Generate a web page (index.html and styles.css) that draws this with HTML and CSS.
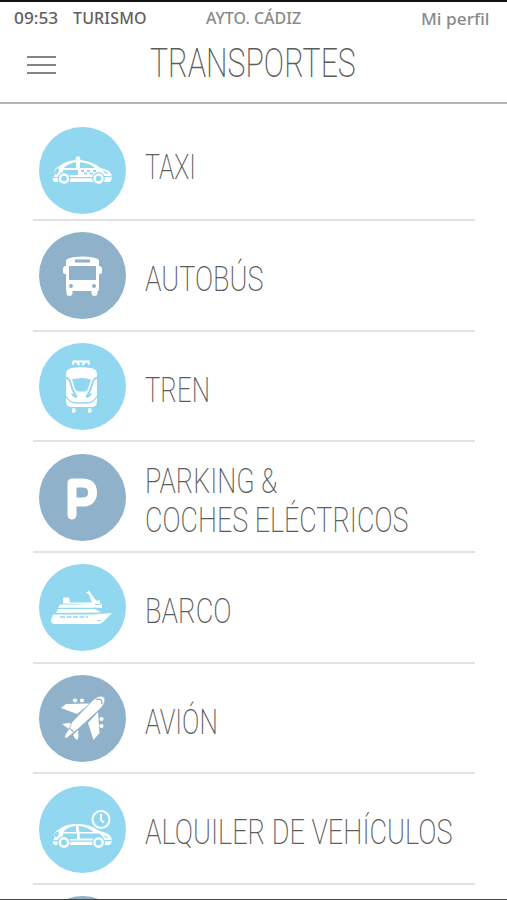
FILE: index.html
```html
<!DOCTYPE html>
<html lang="es">
<head>
<meta charset="utf-8">
<meta name="viewport" content="width=device-width">
<title>Transportes</title>
<link rel="stylesheet" href="styles.css">
</head>
<body>
<div class="screen">
  <header class="header">
    <div class="status">
      <span class="status-item time">09:53</span>
      <span class="status-item tourism">TURISMO</span>
      <span class="status-item council">AYTO. CÁDIZ</span>
      <span class="status-item profile">Mi perfil</span>
    </div>
    <div class="titlebar">
      <div class="menu"><i></i><i></i><i></i></div>
      <h1 class="title">TRANSPORTES</h1>
    </div>
  </header>
  <ul class="list">
    <li class="row first">
      <svg class="icon light" viewBox="0 0 87 87">
        <path fill="#fff" d="M14 54v-4l1.500-1v-6q2-3 5-4 6-5 16-6l1-3.500h3l1 3.500q11 1 20 8 10 2 11 7v5l-2 2H16z"/>
        <path fill="#91d7f0" d="M19 40.500q2 3-1 7h-2.500l.5-4zM25 40.500q5-4.500 12-5.200V41H25.500zM24 43h15v5H27l-3-2zM41 35.300q8 .5 14.500 5.200v.5H41z"/>
        <path fill="#91d7f0" d="M14 50h6v1h-6zM31 50h23v1.200H31zM64 49h8v1.200h-8zM64 43l6 4-4-.5zM42 43h3v2h-3zM48 43h3v2h-3zM54 43h3v2h-3zM45 45.500h3v2h-3zM51 45.500h3v2h-3z"/>
        <g fill="#fff" stroke="#91d7f0" stroke-width="1.200"><circle cx="25" cy="51.500" r="5.800"/><circle cx="59.500" cy="51.500" r="5.800"/></g>
        <g fill="#91d7f0"><circle cx="25" cy="51.500" r="2.800"/><circle cx="59.500" cy="51.500" r="2.800"/></g>
      </svg>
      <span class="label taxi">TAXI</span>
    </li>
    <li class="row">
      <svg class="icon dark" viewBox="0 0 87 87">
        <path fill="#fff" fill-rule="evenodd" d="M27 34V29q0-4 16.500-4.500Q60 25 60 29v5q3 0 3 3v3q0 2-3 2v15q0 2-1.500 2v2q0 3-3 3t-3-3v-2h-19v2q0 3-3 3t-3-3v-2Q27 59 27 57V42q-3 0-3-2v-3q0-3 3-3zM36 27.500v3h15v-3zM30 34v14h27V34z"/>
        <g fill="#8fb1c9"><circle cx="32" cy="54" r="2"/><circle cx="55" cy="54" r="2"/></g>
      </svg>
      <span class="label bus">AUTOBÚS</span>
    </li>
    <li class="row">
      <svg class="icon light" viewBox="0 0 87 87">
        <path fill="none" stroke="#fff" stroke-width="2.200" d="M33.500 18.500h17M35 18.500l-1.500 3M49 18.500l1.500 3M37.500 18.500l3 3.500M46.500 18.500l-3 3.500"/>
        <path fill="#fff" d="M27 31q0-5 6-6 9-1.500 19 0 6 1 6 6v27q0 6-6 6H33q-6 0-6-6z"/>
        <path fill="none" stroke="#91d7f0" stroke-width="1.800" d="M26 34.500q4.500 0 6 7t6 12.500M59 34.500q-4.500 0-6 7T47 54"/>
        <path fill="#91d7f0" d="M33 36.500q9.500-3 19 0l-2 6q-1 6-5 6h-5q-4 0-5-6z"/>
        <path fill="#91d7f0" d="M32 50l5 2v3q-4-1-5-5zM53 50l-5 2v3q4-1 5-5z"/>
        <path fill="none" stroke="#91d7f0" stroke-width="1.300" d="M27 53q3 7 11 7h9q8 0 11-7"/>
        <path fill="#fff" d="M33 65.500h3.500v4H33zM49 65.500h3.500v4H49z"/>
      </svg>
      <span class="label train">TREN</span>
    </li>
    <li class="row">
      <svg class="icon dark" viewBox="0 0 87 87">
        <path fill="none" stroke="#fff" stroke-width="9" stroke-linecap="round" stroke-linejoin="round" d="M33 61V29h10.500q10 0 10 9.500t-10 9.500H33"/>
      </svg>
      <span class="label"><span class="line parking-top">PARKING &amp;</span><span class="line parking-bottom">COCHES ELÉCTRICOS</span></span>
    </li>
    <li class="row">
      <svg class="icon light" viewBox="0 0 87 87">
        <path fill="#fff" d="M14 50.500h40l19-1.500-9 9q-2 2-5 2H16q-4 0-4-4zM17 49l2-4h37l6 3.500zM19 43.800l2-3.300h32l3 3.300zM24 39.500v-5l1-1h5l1 5h22l-2-5-1-3-3-2 2-1 1-1 2 3 2 3 3 4h4v3l2 1v3.500l-7-.5-4-3z"/>
        <path fill="none" stroke="#91d7f0" stroke-width="1.500" stroke-dasharray="5 1.500" d="M21 53h28"/>
        <path stroke="#91d7f0" d="M56 40.500h5M58 56.500h4"/>
      </svg>
      <span class="label ship">BARCO</span>
    </li>
    <li class="row">
      <svg class="icon dark" viewBox="0 0 87 87">
        <path fill="#fff" d="M22 33l5-4 24-.5-13 10.500zM59 37l1.500 21-6 7L49 48zM23 49l6-1 5 1-4 5zM34 60l5-5 .5 6-1 4-2-1z"/>
        <path fill="#fff" stroke="#8fb1c9" stroke-width=".8" d="M33 47L54 25q5-4 8-4 4 0 4 4 0 4-5 9L39 54l-4 3-7 6q-3 1-2-3l5-8z"/>
        <g fill="#fff"><circle cx="36" cy="25.500" r="2.100"/><circle cx="43" cy="25.500" r="2.100"/><circle cx="62.500" cy="44" r="2.100"/><circle cx="62.500" cy="51" r="2.100"/></g>
        <path fill="none" stroke="#8fb1c9" stroke-width="1.200" d="M57 25q6-3 6 4M30.500 53.500l4 3"/>
      </svg>
      <span class="label plane">AVIÓN</span>
    </li>
    <li class="row">
      <svg class="icon light" viewBox="0 0 87 87">
        <g fill="#91d7f0" stroke="#fff" stroke-width="2"><circle cx="62" cy="33.500" r="8.500"/><path d="M62 28v6l3 2.500"/></g>
        <path fill="#fff" d="M14 58v-4l1.500-1v-6q2-3 5-4 6-5 17-5 13-.5 23 7 10 2 12 7v5l-2 2H16z"/>
        <path fill="#91d7f0" d="M19 45q2 3-1 6h-2.500l.5-4zM25 45q5-4.500 12-5v6H25.500zM24 47.500h14V53H27l-3-3zM39.500 40q8 .5 15 6H40.500zM40.500 47.500h20L64 51l-5 1.500H41z"/>
        <path fill="#91d7f0" d="M14 54h6v1.200h-6zM31 54.500h23v1.300H31zM64 54h8v1.200h-8zM65 49l5 3-4-.5z"/>
        <g fill="#fff" stroke="#91d7f0" stroke-width="1.200"><circle cx="25" cy="56.500" r="6"/><circle cx="59.500" cy="56.500" r="6"/></g>
        <g fill="#91d7f0"><circle cx="25" cy="56.500" r="2.900"/><circle cx="59.500" cy="56.500" r="2.900"/></g>
      </svg>
      <span class="label rental">ALQUILER DE VEHÍCULOS</span>
    </li>
    <li class="row">
      <svg class="icon dark" viewBox="0 0 87 87"></svg>
    </li>
  </ul>
  <div class="bottom-edge"></div>
</div>
</body>
</html>
```
FILE: styles.css
```css
* { box-sizing: border-box; }
body { margin: 0; background: #fff; overflow: hidden; }
.screen {
  position: relative;
  width: 507px;
  height: 900px;
  overflow: hidden;
  border-top: 2px solid #111;
  font-family: Roboto, "Liberation Sans", sans-serif;
  color: #5c5c5c;
}
.header { height: 102px; border-bottom: 2px solid #b4b4b4; }
.status {
  display: grid;
  grid-template-columns: 59px 133px 215px 1fr;
  height: 34px;
  padding-left: 14px;
  font: 500 16px/33px "Noto Sans", sans-serif;
  color: #8a8a8a;
}
.status-item { white-space: nowrap; transform-origin: 0 50%; }
.time, .tourism { color: #606060; }
.time { transform: scaleX(1.08); }
.tourism { letter-spacing: .15px; }
.profile { padding-top: 1px; transform: scaleX(1.08); }
.titlebar { display: flex; height: 56px; }
.menu { display: flex; flex-direction: column; gap: 6px; width: 124px; padding: 20px 0 0 27px; }
.menu i { width: 29px; height: 2px; background: #858585; }
.title {
  margin: 0 0 0 26px;
  font-weight: 200;
  font-size: 40px;
  line-height: 56px;
  white-space: nowrap;
  transform: scaleX(.757);
  transform-origin: 0 50%;
}
.list { margin: 0; padding: 0 32px 0 33px; list-style: none; }
.row {
  display: flex;
  align-items: center;
  height: 110.670px;
  padding: 1px 0 0 6px;
  border-bottom: 2px solid #e2e2e2;
}
.row.first { height: 117px; padding-top: 17px; }
.icon { flex: none; width: 87px; height: 87px; margin-right: 19px; border-radius: 50%; }
.light { background: #91d7f0; }
.dark { background: #8fb1c9; }
.label {
  width: 310px;
  padding-top: 8px;
  font-weight: 200;
  font-size: 35px;
  line-height: 39.500px;
  white-space: nowrap;
  transform-origin: 0 50%;
}
.first .label { padding: 0 0 4px; }
.line { display: block; transform-origin: 0 50%; }
.taxi { transform: scaleX(.715); }
.bus { transform: scaleX(.773); }
.train { transform: scaleX(.735); }
.parking-top { transform: scaleX(.767); }
.parking-bottom { transform: scaleX(.769); }
.ship { transform: scaleX(.778); }
.plane { transform: scaleX(.74); }
.rental { transform: scaleX(.775); }
.bottom-edge { position: absolute; left: 0; right: 0; bottom: 0; height: 1px; background: #444; }
```
